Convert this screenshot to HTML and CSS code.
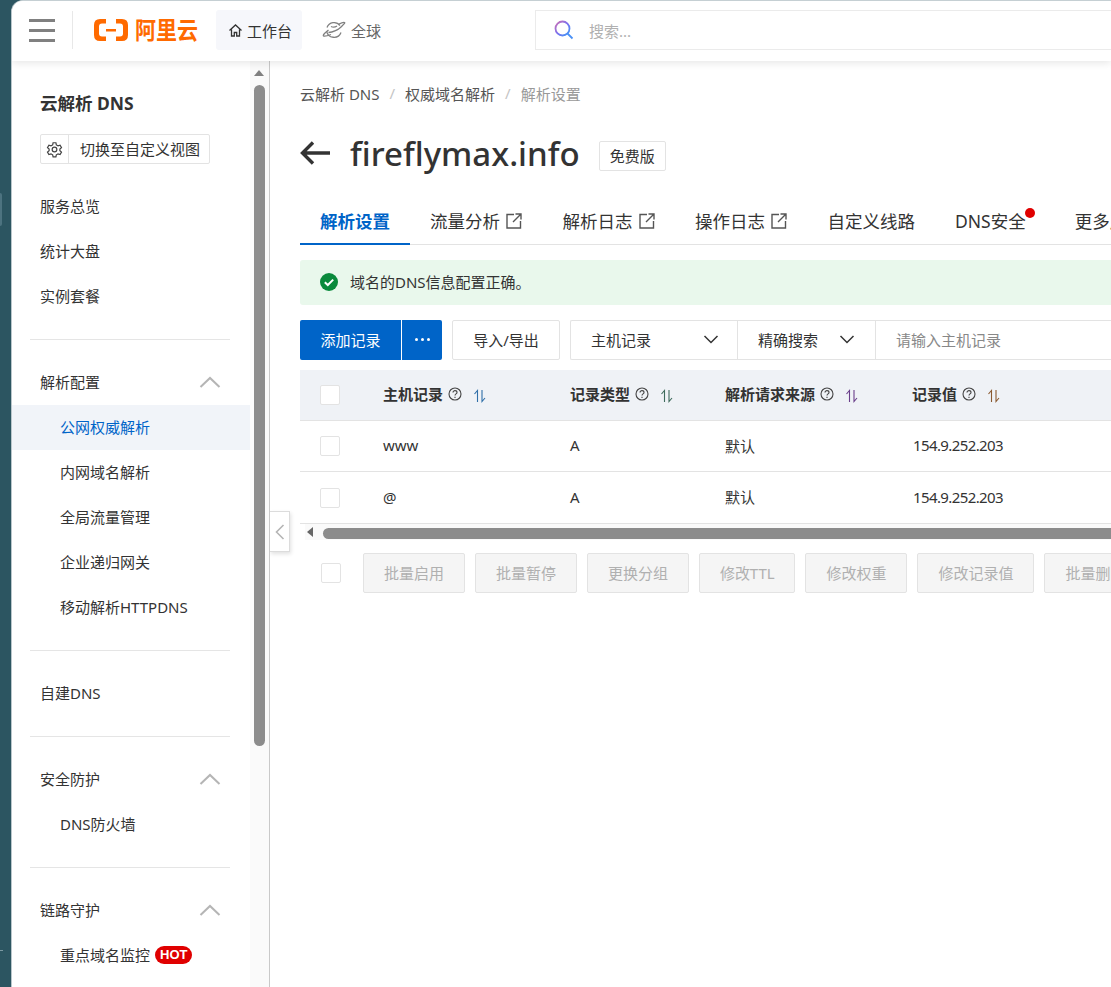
FILE: index.html
```html
<!DOCTYPE html>
<html lang="zh-CN">
<head>
    <meta charset="UTF-8">
    <title>云解析 DNS</title>
    <link rel="stylesheet" href="styles.css">
</head>
<body>
    <div class="desk-strip"><span class="desk-handle"></span><span class="desk-tick"></span></div>
    <div class="window">
        <header class="topbar">
            <div class="burger"><i></i><i></i><i></i></div>
            <div class="logo">
                <svg width="34" height="22" viewBox="0 0 34 22"><path d="M12 0H6Q0 0 0 6V16Q0 22 6 22H12V17.500H8Q5 17.500 5 14.500V7.500Q5 4.500 8 4.500H12ZM22 0H28Q34 0 34 6V16Q34 22 28 22H22V17.500H26Q29 17.500 29 14.500V7.500Q29 4.500 26 4.500H22ZM12 10H22V12.400H12Z" fill="#ff6a00"/></svg>
                <span>阿里云</span>
            </div>
            <a class="top-link top-link-active">
                <svg width="15" height="15" viewBox="0 0 15 15" fill="none" stroke="#333" stroke-width="1.300"><path d="M1.500 7.500 7.500 2l6 5.500M3.500 6.500V13h2.800V9.500h2.400V13h2.800V6.500"/></svg>
                工作台
            </a>
            <a class="top-link top-link-globe">
                <svg width="24" height="20" viewBox="0 0 24 20" fill="none" stroke="#808080" stroke-width="1.300"><path d="M18 5.500A7.500 7.500 0 0 0 5 7.500M4.600 11A7.500 7.500 0 0 0 19 12.500"/><path d="M6.500 12.500C11 12.500 16.500 9.500 19 7 21 5 23.500 3 22.500 2.500 21.500 2 19 3 17 4M6.500 10C3.500 12.500 .5 15 1.500 16 3 16.800 6.500 15.500 9 14.500M9 6.500c2 1 4 .8 6-.5"/></svg>
                全球
            </a>
            <div class="top-search">
                <svg width="20" height="20" viewBox="0 0 20 20" fill="none" stroke-width="1.800"><defs><linearGradient id="sg" x1="0" y1="0" x2="1" y2="1"><stop offset="0" stop-color="#d070b0"/><stop offset=".5" stop-color="#7a70f0"/><stop offset="1" stop-color="#3a9af5"/></linearGradient></defs><circle cx="8.500" cy="8.500" r="7" stroke="url(#sg)"/><path d="M13.500 13.500 18.500 18.500" stroke="#4a90f5"/></svg>
                <span>搜索...</span>
            </div>
        </header>

        <div class="body-row">
            <aside class="sidebar">
                <nav class="side-nav">
                    <h2 class="side-title">云解析 DNS</h2>
                    <div class="view-switch">
                        <span class="view-gear">
                            <svg width="17" height="17" viewBox="0 0 24 24" fill="none" stroke="#444" stroke-width="1.700"><circle cx="12" cy="12" r="3.300"/><path d="M10 2.500h4l.6 3 2.400 1.400 2.900-1 2 3.400-2.300 2v2.400l2.300 2-2 3.400-2.900-1-2.400 1.400-.6 3h-4l-.6-3L7 18.100l-2.900 1-2-3.400 2.300-2v-2.400l-2.300-2 2-3.400 2.900 1L9.400 5.500z"/></svg>
                        </span>
                        <span class="view-label">切换至自定义视图</span>
                    </div>

                    <a class="nav-item">服务总览</a>
                    <a class="nav-item">统计大盘</a>
                    <a class="nav-item">实例套餐</a>
                    <div class="nav-divider"></div>

                    <a class="nav-item nav-group">解析配置<svg class="caret" width="22" height="12" viewBox="0 0 22 12"><path d="M1.500 11 11 2l9.500 9" fill="none" stroke="#b5b5b5" stroke-width="2"/></svg></a>
                    <a class="nav-item nav-sub nav-active">公网权威解析</a>
                    <a class="nav-item nav-sub">内网域名解析</a>
                    <a class="nav-item nav-sub">全局流量管理</a>
                    <a class="nav-item nav-sub">企业递归网关</a>
                    <a class="nav-item nav-sub">移动解析HTTPDNS</a>
                    <div class="nav-divider"></div>

                    <a class="nav-item">自建DNS</a>
                    <div class="nav-divider"></div>

                    <a class="nav-item nav-group">安全防护<svg class="caret" width="22" height="12" viewBox="0 0 22 12"><path d="M1.500 11 11 2l9.500 9" fill="none" stroke="#b5b5b5" stroke-width="2"/></svg></a>
                    <a class="nav-item nav-sub">DNS防火墙</a>
                    <div class="nav-divider"></div>

                    <a class="nav-item nav-group">链路守护<svg class="caret" width="22" height="12" viewBox="0 0 22 12"><path d="M1.500 11 11 2l9.500 9" fill="none" stroke="#b5b5b5" stroke-width="2"/></svg></a>
                    <a class="nav-item nav-sub">重点域名监控<span class="hot">HOT</span></a>
                </nav>
                <div class="side-scroll">
                    <span class="side-scroll-up"></span>
                    <span class="side-scroll-thumb"></span>
                </div>
            </aside>

            <main class="main">
                <div class="collapse-tab">
                    <svg width="10" height="16" viewBox="0 0 10 16"><path d="M8.500 1 1.500 8l7 7" fill="none" stroke="#b5b5b5" stroke-width="1.600"/></svg>
                </div>

                <div class="crumbs">
                    <span>云解析 DNS</span><em>/</em><span>权威域名解析</span><em>/</em><span class="crumb-last">解析设置</span>
                </div>

                <div class="page-head">
                    <svg width="30" height="24" viewBox="0 0 30 24"><path d="M13 1.500 2.500 12 13 22.500M3 12H30" fill="none" stroke="#333" stroke-width="3.400"/></svg>
                    <h1>fireflymax.info</h1>
                    <span class="plan-tag">免费版</span>
                </div>

                <div class="tabs">
                    <a class="tab tab-active">解析设置</a>
                    <a class="tab">流量分析<svg class="ext" width="16" height="16" viewBox="0 0 16 16" fill="none" stroke="#555" stroke-width="1.400"><path d="M8 1.500H1v13.500h13.500V8M9.500 1H15v5.500M15 1 7 9"/></svg></a>
                    <a class="tab">解析日志<svg class="ext" width="16" height="16" viewBox="0 0 16 16" fill="none" stroke="#555" stroke-width="1.400"><path d="M8 1.500H1v13.500h13.500V8M9.500 1H15v5.500M15 1 7 9"/></svg></a>
                    <a class="tab">操作日志<svg class="ext" width="16" height="16" viewBox="0 0 16 16" fill="none" stroke="#555" stroke-width="1.400"><path d="M8 1.500H1v13.500h13.500V8M9.500 1H15v5.500M15 1 7 9"/></svg></a>
                    <a class="tab">自定义线路</a>
                    <a class="tab tab-dotted">DNS安全<span class="tab-dot"></span></a>
                    <a class="tab">更多产品</a>
                </div>

                <div class="alert">
                    <svg width="18" height="18" viewBox="0 0 18 18"><circle cx="9" cy="9" r="9" fill="#0a8a3c"/><path d="M4.800 9.200 7.800 12l5.400-5.400" fill="none" stroke="#fff" stroke-width="2"/></svg>
                    域名的DNS信息配置正确。
                </div>

                <div class="toolbar">
                    <div class="add-group">
                        <button class="btn-primary btn-add">添加记录</button>
                        <button class="btn-primary btn-more"><i></i><i></i><i></i></button>
                    </div>
                    <button class="btn-plain btn-import">导入/导出</button>
                    <div class="search-combo">
                        <div class="combo-select combo-field">主机记录<svg width="16" height="9" viewBox="0 0 16 9"><path d="M1.500 1 8 7.500 14.500 1" fill="none" stroke="#333" stroke-width="1.500"/></svg></div>
                        <div class="combo-select combo-mode">精确搜索<svg width="16" height="9" viewBox="0 0 16 9"><path d="M1.500 1 8 7.500 14.500 1" fill="none" stroke="#333" stroke-width="1.500"/></svg></div>
                        <div class="combo-input">请输入主机记录</div>
                    </div>
                </div>

                <div class="record-table">
                    <div class="table-row table-head">
                        <div class="col-check"><span class="checkbox"></span></div>
                        <div class="col-host">主机记录<svg class="help" width="14" height="14" viewBox="0 0 14 14" fill="none" stroke="#444" stroke-width="1.100"><circle cx="7" cy="7" r="6"/><path d="M5 5.500C5 3 9 3 9 5.500 9 7 7 6.800 7 8.500M7 9.800v1.200"/></svg><svg class="sort" width="14" height="14" viewBox="0 0 14 14" fill="none" stroke="#2f6fa8" stroke-width="1.100"><path d="M4.500 13V1.500L1.500 5M9 1v11.500L12 9"/></svg></div>
                        <div class="col-type">记录类型<svg class="help" width="14" height="14" viewBox="0 0 14 14" fill="none" stroke="#444" stroke-width="1.100"><circle cx="7" cy="7" r="6"/><path d="M5 5.500C5 3 9 3 9 5.500 9 7 7 6.800 7 8.500M7 9.800v1.200"/></svg><svg class="sort" width="14" height="14" viewBox="0 0 14 14" fill="none" stroke="#3f6b5c" stroke-width="1.100"><path d="M4.500 13V1.500L1.500 5M9 1v11.500L12 9"/></svg></div>
                        <div class="col-source">解析请求来源<svg class="help" width="14" height="14" viewBox="0 0 14 14" fill="none" stroke="#444" stroke-width="1.100"><circle cx="7" cy="7" r="6"/><path d="M5 5.500C5 3 9 3 9 5.500 9 7 7 6.800 7 8.500M7 9.800v1.200"/></svg><svg class="sort" width="14" height="14" viewBox="0 0 14 14" fill="none" stroke="#6a3f8a" stroke-width="1.100"><path d="M4.500 13V1.500L1.500 5M9 1v11.500L12 9"/></svg></div>
                        <div class="col-value">记录值<svg class="help" width="14" height="14" viewBox="0 0 14 14" fill="none" stroke="#444" stroke-width="1.100"><circle cx="7" cy="7" r="6"/><path d="M5 5.500C5 3 9 3 9 5.500 9 7 7 6.800 7 8.500M7 9.800v1.200"/></svg><svg class="sort" width="14" height="14" viewBox="0 0 14 14" fill="none" stroke="#8a5a30" stroke-width="1.100"><path d="M4.500 13V1.500L1.500 5M9 1v11.500L12 9"/></svg></div>
                    </div>
                    <div class="table-row">
                        <div class="col-check"><span class="checkbox"></span></div>
                        <div class="col-host">www</div>
                        <div class="col-type">A</div>
                        <div class="col-source">默认</div>
                        <div class="col-value">154.9.252.203</div>
                    </div>
                    <div class="table-row table-row-last">
                        <div class="col-check"><span class="checkbox"></span></div>
                        <div class="col-host">@</div>
                        <div class="col-type">A</div>
                        <div class="col-source">默认</div>
                        <div class="col-value">154.9.252.203</div>
                    </div>
                </div>

                <div class="h-scroll">
                    <span class="h-scroll-left"></span>
                    <span class="h-scroll-thumb"></span>
                </div>

                <div class="batch-bar">
                    <span class="checkbox"></span>
                    <div class="batch-buttons">
                        <button class="btn-off">批量启用</button>
                        <button class="btn-off">批量暂停</button>
                        <button class="btn-off">更换分组</button>
                        <button class="btn-off btn-ttl">修改TTL</button>
                        <button class="btn-off">修改权重</button>
                        <button class="btn-off">修改记录值</button>
                        <button class="btn-off">批量删除</button>
                    </div>
                </div>
            </main>
        </div>
    </div>
</body>
</html>
```

FILE: styles.css
```css
* {
    box-sizing: border-box;
}
html, body {
    height: 100%;
}
body {
    margin: 0;
    display: flex;
    overflow: hidden;
    background: #2c5561;
    font-family: "Noto Sans", "Noto Sans CJK SC", sans-serif;
    font-size: 15px;
    color: #333333;
}
button {
    font: inherit;
}
.desk-strip {
    width: 11px;
    flex-shrink: 0;
    position: relative;
}
.desk-handle {
    position: absolute;
    left: 0;
    top: 193px;
    width: 2px;
    height: 33px;
    border-radius: 0 2px 2px 0;
    background: #4d7380;
}
.desk-tick {
    position: absolute;
    left: 0;
    top: 950px;
    width: 3px;
    height: 1px;
    background: #7d9aa3;
}
.window {
    flex: 1;
    min-width: 0;
    display: flex;
    flex-direction: column;
    background: #ffffff;
    border-top: 1px solid #c5cfd3;
    border-left: 1px solid #b9c6cb;
    border-top-left-radius: 12px;
    overflow: hidden;
}

/* top bar */
.topbar {
    height: 60px;
    flex-shrink: 0;
    padding-bottom: 2px;
    display: flex;
    align-items: center;
    position: relative;
    z-index: 2;
    background: #ffffff;
    box-shadow: 0 2px 8px rgba(0,0,0,0.1);
}
.burger {
    width: 26px;
    margin-left: 17px;
    display: flex;
    flex-direction: column;
    gap: 7px;
}
.burger i {
    height: 3px;
    background: #808080;
}
.logo {
    height: 38px;
    margin-left: 17px;
    padding-left: 21px;
    border-left: 1px solid #e8e8e8;
    display: flex;
    align-items: center;
    gap: 7px;
    color: #ff6a00;
    font-size: 21px;
    font-weight: 700;
    line-height: 1;
}
.logo span {
    transform: scaleY(1.15);
}
.top-link {
    height: 40px;
    display: flex;
    align-items: center;
    gap: 4px;
    padding: 0 10px 0 12px;
    white-space: nowrap;
}
.top-link-active {
    margin-left: 18px;
    background: #f6f7fb;
    border-radius: 3px;
}
.top-link-globe {
    margin-left: 8px;
    gap: 5px;
    color: #666666;
}
.top-search {
    flex: 1;
    height: 40px;
    margin-left: 144px;
    margin-right: -10px;
    padding-left: 18px;
    display: flex;
    align-items: center;
    gap: 15px;
    border: 1px solid #ebebeb;
    color: #b0b0b0;
}

/* sidebar */
.body-row {
    flex: 1;
    min-height: 0;
    display: flex;
}
.sidebar {
    width: 258px;
    flex-shrink: 0;
    display: flex;
    border-right: 1px solid #c9c9c9;
}
.side-nav {
    width: 238px;
    flex-shrink: 0;
}
.side-title {
    margin: 30px 0 0 28px;
    font-size: 17.500px;
    font-weight: 700;
    line-height: 24px;
}
.view-switch {
    width: 170px;
    height: 30px;
    margin: 19px 0 20px 28px;
    display: flex;
    align-items: center;
    border: 1px solid #e3e3e3;
    border-radius: 2px;
}
.view-gear {
    width: 28px;
    height: 100%;
    display: flex;
    align-items: center;
    justify-content: center;
    border-right: 1px solid #e3e3e3;
}
.view-label {
    padding-left: 11px;
    padding-bottom: 2px;
    white-space: nowrap;
}
.nav-item {
    height: 45px;
    padding-left: 28px;
    padding-bottom: 2px;
    display: flex;
    align-items: center;
    white-space: nowrap;
}
.nav-group {
    justify-content: space-between;
    padding-right: 29px;
}
.nav-sub {
    padding-left: 48px;
}
.nav-active {
    background: #f1f4f9;
    color: #0064c8;
}
.nav-divider {
    height: 1px;
    margin: 20px 20px 20px 18px;
    background: #e5e5e5;
}
.hot {
    margin-left: 5px;
    padding: 0 5px;
    height: 18px;
    line-height: 18px;
    border-radius: 9px;
    background: #e00000;
    color: #ffffff;
    font-size: 13px;
    font-weight: 700;
    font-family: "Liberation Sans", sans-serif;
}
.side-scroll {
    flex: 1;
    background: #fafafa;
    position: relative;
}
.side-scroll-up {
    position: absolute;
    left: 4px;
    top: 9px;
    border: 5px solid transparent;
    border-top: 0;
    border-bottom: 6px solid #808080;
}
.side-scroll-thumb {
    position: absolute;
    left: 4px;
    top: 24px;
    width: 11px;
    height: 661px;
    border-radius: 6px;
    background: #8c8c8c;
}

/* main area */
.main {
    flex: 1;
    min-width: 0;
    padding: 0 0 0 30px;
    position: relative;
    overflow: hidden;
}
.collapse-tab {
    position: absolute;
    left: 0;
    top: 450px;
    width: 20px;
    height: 41px;
    display: flex;
    align-items: center;
    justify-content: center;
    background: #ffffff;
    border: 1px solid #dcdcdc;
    border-left: 0;
    box-shadow: 1px 2px 4px rgba(0,0,0,0.12);
}
.crumbs {
    margin-top: 21px;
    height: 22px;
    display: flex;
    align-items: center;
    color: #555555;
    white-space: nowrap;
}
.crumbs em {
    margin: 0 10px;
    font-style: normal;
    color: #c4c4c4;
}
.crumb-last {
    color: #999999;
}
.page-head {
    margin-top: 26px;
    height: 46px;
    display: flex;
    align-items: center;
}
.page-head h1 {
    margin: 0 19px 0 20px;
    font-size: 33px;
    font-weight: 500;
    white-space: nowrap;
}
.plan-tag {
    height: 30px;
    margin-top: 6px;
    padding: 0 10px 2px;
    display: flex;
    align-items: center;
    border: 1px solid #e3e3e3;
    border-radius: 2px;
    white-space: nowrap;
}
.tabs {
    margin-top: 23px;
    height: 46px;
    display: flex;
    border-bottom: 1px solid #e3e3e3;
    white-space: nowrap;
}
.tab {
    height: 45px;
    padding: 0 20px 2px;
    display: flex;
    align-items: center;
    flex-shrink: 0;
    gap: 6px;
    font-size: 17.500px;
    position: relative;
}
.tab .ext {
    margin-right: .5px;
}
.tab-active {
    color: #0064c8;
    font-weight: 700;
    border-bottom: 2px solid #0064c8;
    height: 46px;
    padding-bottom: 1px;
}
.tab-dotted {
    padding-right: 29px;
}
.tab-dot {
    position: absolute;
    right: 20px;
    top: 9px;
    width: 10px;
    height: 10px;
    border-radius: 50%;
    background: #e00000;
}
.alert {
    width: 1000px;
    height: 45px;
    margin-top: 15px;
    padding-left: 20px;
    padding-bottom: 2px;
    display: flex;
    align-items: center;
    gap: 12px;
    background: #e9f8ec;
    border-radius: 3px;
    white-space: nowrap;
}
.toolbar {
    margin-top: 15px;
    display: flex;
    height: 40px;
    gap: 10px;
    width: 1000px;
}
.add-group {
    display: flex;
    gap: 1px;
}
.btn-primary {
    height: 40px;
    border: 0;
    background: #0064c8;
    color: #ffffff;
    display: flex;
    align-items: center;
    justify-content: center;
    padding: 0 0 2px;
}
.btn-add {
    width: 101px;
    border-radius: 2px 0 0 2px;
}
.btn-more {
    width: 40px;
    gap: 3px;
    border-radius: 0 2px 2px 0;
}
.btn-more i {
    width: 3px;
    height: 3px;
    border-radius: 50%;
    background: #ffffff;
}
.btn-plain {
    height: 40px;
    border: 1px solid #e3e3e3;
    border-radius: 2px;
    background: #ffffff;
    color: #333333;
    padding: 0 0 2px;
}
.btn-import {
    width: 108px;
}
.search-combo {
    flex: 1;
    display: flex;
    border: 1px solid #e3e3e3;
    border-right: 0;
    border-radius: 2px 0 0 2px;
}
.combo-select {
    height: 100%;
    padding: 0 17px 2px 20px;
    display: flex;
    align-items: center;
    justify-content: space-between;
    border-right: 1px solid #e3e3e3;
    white-space: nowrap;
}
.combo-field {
    width: 167px;
    padding-right: 18px;
}
.combo-mode {
    width: 138px;
    padding-right: 20px;
}
.combo-input {
    flex: 1;
    padding-left: 20px;
    line-height: 38px;
    color: #888888;
    white-space: nowrap;
}

/* table */
.record-table {
    margin-top: 10px;
    width: 1000px;
}
.table-row {
    height: 51px;
    display: flex;
    align-items: center;
    border-bottom: 1px solid #e3e3e3;
    white-space: nowrap;
}
.table-row > div {
    padding-bottom: 2px;
}
.table-row-last {
    height: 52px;
}
.table-head {
    background: #eff2f6;
    font-weight: 700;
}
.table-head > div {
    padding-bottom: 3px;
}
.table-row > .col-check {
    width: 83px;
    padding: 0 0 0 20px;
    display: flex;
}
.col-host {
    width: 187px;
}
.col-type {
    width: 155px;
}
.col-source {
    width: 187px;
}
.col-value {
    letter-spacing: -0.6px;
    padding-left: 1px;
}
.table-head .col-value {
    letter-spacing: 0;
    padding-left: 0;
}
.table-head .help {
    margin-left: 5px;
    vertical-align: -1px;
}
.table-head .sort {
    margin-left: 11px;
    vertical-align: -3px;
}
.checkbox {
    display: block;
    width: 20px;
    height: 20px;
    background: #ffffff;
    border: 1px solid #e3e3e3;
    border-radius: 2px;
    flex-shrink: 0;
}
.h-scroll {
    width: 1000px;
    height: 16px;
    margin-left: 5px;
    background: #fafafa;
    position: relative;
}
.h-scroll-left {
    position: absolute;
    left: 2px;
    top: 3px;
    border: 5px solid transparent;
    border-left: 0;
    border-right: 6px solid #666666;
}
.h-scroll-thumb {
    position: absolute;
    left: 18px;
    top: 4px;
    right: 0;
    height: 11px;
    border-radius: 6px 0 0 6px;
    background: #8c8c8c;
}
.batch-bar {
    margin-top: 13px;
    display: flex;
    align-items: center;
    padding-left: 21px;
    width: 1000px;
}
.batch-buttons {
    margin-left: 22px;
    display: flex;
    gap: 10px;
}
.btn-off {
    height: 40px;
    padding: 0 20px 2px;
    border: 1px solid #e3e3e3;
    border-radius: 2px;
    background: #f5f5f5;
    color: #b0b0b0;
    white-space: nowrap;
}
.btn-ttl {
    letter-spacing: -0.1px;
}
```
